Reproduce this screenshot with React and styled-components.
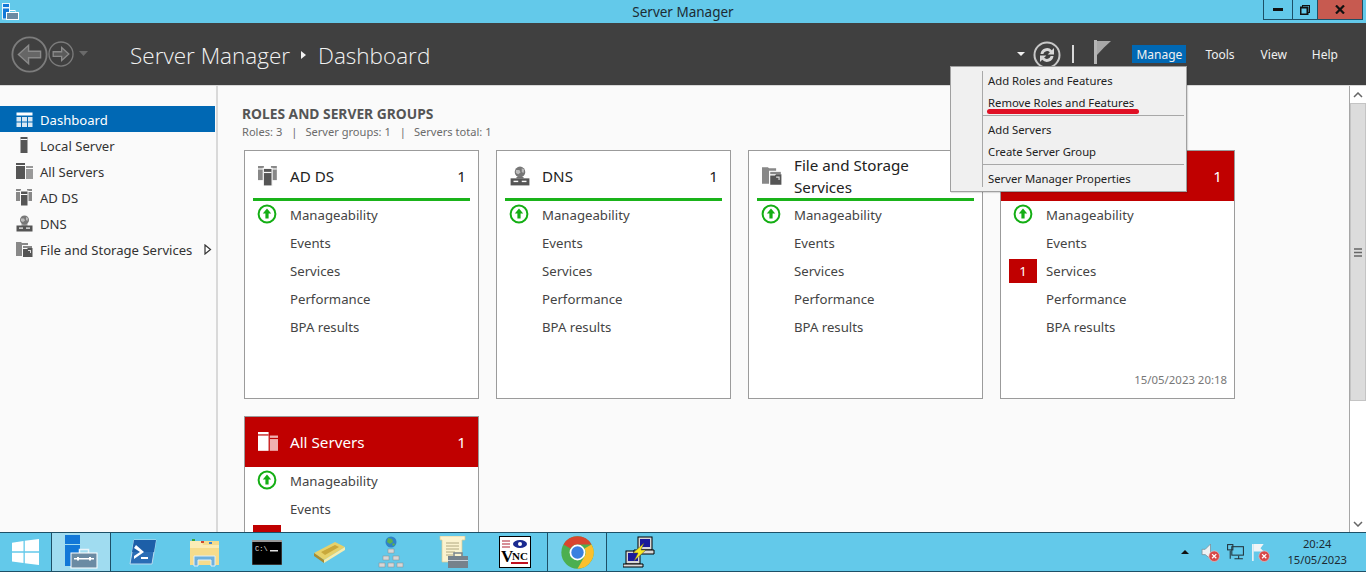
import styled, { createGlobalStyle } from 'styled-components';

const GlobalStyle = createGlobalStyle`
  html, body, #root { margin: 0; height: 100%; }
  body {
    overflow: hidden;
    background: #fafafa;
    font-family: "Noto Sans", "Open Sans", "Liberation Sans", sans-serif;
    font-size: 13px;
  }
  * { box-sizing: border-box; }
`;

const Shell = styled.div`
  position: relative;
  display: grid;
  grid-template-rows: 23px 63px 1fr 40px;
  height: 572px;
  width: 1366px;
  overflow: hidden;
`;

const TitleBar = styled.div`
  position: relative;
  display: flex;
  align-items: center;
  justify-content: center;
  background: #63c9ea;
  color: #1c2b33;
  font-size: 13.5px;
`;

const AppGlyph = styled.svg`
  position: absolute;
  left: 2px;
  top: 3px;
`;

const WindowButtons = styled.div`
  position: absolute;
  right: 3px;
  top: 0;
  display: flex;
  height: 20px;
  border: 1px solid #1d5067;
  border-top: 0;
`;

const WindowButton = styled.div`
  display: flex;
  align-items: center;
  justify-content: center;
  width: ${(p) => p.$w}px;
  background: ${(p) => (p.$close ? '#c75a50' : 'transparent')};
  border-left: ${(p) => (p.$first ? '0' : '1px solid #1d5067')};
`;

const Header = styled.header`
  display: flex;
  align-items: center;
  background: #404040;
  border-bottom: 1px solid #d8d8d8;
  padding-left: 11px;
  padding-right: 22px;
`;

const NavArrows = styled.div`
  display: flex;
  align-items: center;
  width: 119px;
`;

const Crumbs = styled.div`
  display: flex;
  align-items: center;
  flex: 1;
  padding-top: 2px;
  color: #f2f2f2;
  font-family: "Open Sans", "Noto Sans", sans-serif;
  font-weight: 300;
  font-size: 22.5px;
`;

const CrumbArrow = styled.span`
  width: 0;
  height: 0;
  margin: 0 12px 0 11px;
  border-left: 5px solid #f2f2f2;
  border-top: 4px solid transparent;
  border-bottom: 4px solid transparent;
`;

const HeaderTools = styled.div`
  display: flex;
  align-items: center;
`;

const DropCaret = styled.span`
  width: 0;
  height: 0;
  margin-right: 8px;
  border-top: 4px solid #f0f0f0;
  border-left: 4px solid transparent;
  border-right: 4px solid transparent;
`;

const RefreshGlyph = styled.svg`
  margin-top: 2px;
`;

const Separator = styled.span`
  width: 2px;
  height: 18px;
  background: #d8d8d8;
  margin: 0 20px 0 11px;
`;

const FlagGlyph = styled.svg`
  margin-bottom: 4px;
`;

const MenuLabels = styled.nav`
  display: flex;
  align-items: center;
  margin-left: 20px;
`;

const MenuLabel = styled.span`
  padding: 0 ${(p) => (p.$active ? 4 : 6)}px;
  height: 18px;
  line-height: 20px;
  color: #f0f0f0;
  font-size: 12px;
  margin-right: ${(p) => p.$gap}px;
  background: ${(p) => (p.$active ? '#0068b4' : 'transparent')};
`;

const Body = styled.div`
  display: grid;
  grid-template-columns: 215px 3px 1fr 17px;
  min-height: 0;
`;

const Sidebar = styled.aside`
  padding-top: 20px;
  background: #fafafa;
`;

const SideRow = styled.div`
  display: flex;
  align-items: center;
  height: 26px;
  padding: 1px 0 0 16px;
  gap: 7px;
  color: ${(p) => (p.$active ? '#ffffff' : '#333333')};
  background: ${(p) => (p.$active ? '#0068b4' : 'transparent')};
  font-size: 13.1px;
`;

const SideChevron = styled.svg`
  margin-left: 5px;
`;

const Divider = styled.div`
  background: #d9d9d9;
  margin-left: 1px;
`;

const Content = styled.main`
  padding: 19px 0 0 24px;
  overflow: hidden;
  background: #fafafa;
`;

const SectionTitle = styled.h2`
  margin: 0;
  color: #555555;
  font-size: 13.8px;
  font-weight: 700;
  line-height: 18px;
`;

const SectionMeta = styled.div`
  display: flex;
  color: #6b6b6b;
  font-size: 11.1px;
  line-height: 17px;
  margin-bottom: 10px;
  white-space: pre;
`;

const MetaPipe = styled.span`
  margin: 0 8px 0 9px;
`;

const CardGrid = styled.div`
  display: grid;
  grid-template-columns: repeat(4, 235px);
  grid-auto-rows: 249px;
  gap: 17px;
  margin-left: 2px;
`;

const Card = styled.section`
  display: flex;
  flex-direction: column;
  background: #ffffff;
  border: 1px solid #9b9b9b;
  padding-bottom: 11px;
`;

const CardHead = styled.div`
  display: flex;
  align-items: center;
  height: ${(p) => (p.$alert ? 50 : 49)}px;
  flex: none;
  padding: 0 12px 0 13px;
  gap: 12px;
  color: ${(p) => (p.$alert ? '#ffffff' : '#222222')};
  background: ${(p) => (p.$alert ? '#c00000' : 'transparent')};
  font-size: 15.2px;
`;

const CardName = styled.div`
  flex: 1;
  line-height: 22px;
`;

const CardRule = styled.div`
  height: 3px;
  margin: -2px 8px 0;
  background: #1ab31a;
  flex: none;
`;

const CardRow = styled.div`
  display: flex;
  align-items: center;
  height: 28px;
  flex: none;
  color: #444444;
  font-size: 13.2px;
`;

const RowMark = styled.div`
  display: flex;
  align-items: center;
  width: 45px;
  padding: 0 8px 2px 8px;
`;

const StatusGlyph = styled.svg`
  margin-left: 4px;
`;

const AlertBadge = styled.span`
  display: flex;
  align-items: center;
  justify-content: center;
  width: 28px;
  height: 24px;
  margin-top: 2px;
  background: #c00000;
  color: #ffffff;
`;

const Stamp = styled.div`
  margin-top: auto;
  padding-right: 7px;
  text-align: right;
  color: #777777;
  font-size: 11.4px;
`;

const Scrollbar = styled.div`
  display: flex;
  flex-direction: column;
  background: #ffffff;
  border-left: 1px solid #a6a6a6;
`;

const ScrollButton = styled.div`
  display: flex;
  align-items: center;
  justify-content: center;
  height: 17px;
  flex: none;
  background: #fff;
`;

const ScrollThumb = styled.div`
  display: flex;
  align-items: center;
  justify-content: center;
  height: 298px;
  flex: none;
  background: #dcdcdc;
  border: 1px solid #c4c4c4;
`;

const ScrollRest = styled.div`
  flex: 1;
`;

const Taskbar = styled.footer`
  display: flex;
  align-items: center;
  background: #63c9ea;
  border-top: 1px solid #1d5067;
  border-bottom: 1px solid #1d5067;
`;

const StartButton = styled.div`
  display: flex;
  align-items: center;
  justify-content: center;
  width: 50px;
  height: 100%;
`;

const TaskSlot = styled.div`
  display: flex;
  align-items: center;
  justify-content: center;
  width: 62px;
  height: 100%;
`;

const TaskButton = styled.div`
  display: flex;
  align-items: center;
  justify-content: center;
  width: 60px;
  height: 100%;
  background: ${(p) => (p.$front ? '#a0dcf0' : p.$open ? '#74cfec' : 'transparent')};
  border-left: ${(p) => (p.$open ? '1px solid #1d5067' : '1px solid transparent')};
  border-right: ${(p) => (p.$open ? '1px solid #1d5067' : '1px solid transparent')};
`;

const Tray = styled.div`
  display: flex;
  align-items: center;
  margin-left: auto;
  height: 100%;
  padding-right: 19px;
`;

const TrayCaret = styled.span`
  width: 0;
  height: 0;
  margin-right: 12px;
  border-bottom: 4px solid #111;
  border-left: 4px solid transparent;
  border-right: 4px solid transparent;
`;

const TrayIcons = styled.div`
  display: flex;
  gap: 6px;
  margin-right: 17px;
`;

const Clock = styled.div`
  text-align: center;
  color: #1c2b33;
  font-size: 11.2px;
  line-height: 16px;
`;

const ContextMenu = styled.div`
  position: absolute;
  left: 950px;
  top: 66px;
  width: 237px;
  height: 126px;
  padding: 2px 2px 2px 32px;
  background: #f0f0f0;
  border: 1px solid #a0a0a0;
  box-shadow: 1px 1px 1px rgba(0, 0, 0, 0.12);
`;

const MenuGutter = styled.div`
  position: absolute;
  left: 31px;
  top: 4px;
  bottom: 4px;
  width: 1px;
  background: #a8a8a8;
`;

const MenuItem = styled.div`
  height: 22px;
  line-height: 23px;
  padding-left: 5px;
  color: #222222;
  font-size: 11.3px;
`;

const MenuRule = styled.div`
  height: 1px;
  margin: 2px 0;
  background: #a8a8a8;
`;

const RedMark = styled.div`
  position: absolute;
  left: 36px;
  top: 42px;
  width: 152px;
  height: 5px;
  border-radius: 3px;
  background: #e01025;
`;

const Tower = ({ x, y, w, h, fill, top }) => (
  <>
    <rect x={x} y={y} width={w} height={h} fill={fill} />
    <rect x={x} y={y + 2} width={w} height={1} fill={top} />
  </>
);

const DashIcon = ({ c = '#fff' }) => (
  <svg width="17" height="16" viewBox="0 0 17 16">
    <rect x="0.5" y="0.5" width="16" height="3" fill={c} />
    <g fill={c} opacity="0.85">
      <rect x="0.5" y="5" width="4.5" height="4.5" />
      <rect x="6" y="5" width="5" height="4.5" />
      <rect x="12" y="5" width="4.5" height="4.5" />
      <rect x="0.5" y="10.5" width="4.5" height="4.5" />
      <rect x="6" y="10.5" width="5" height="4.5" />
      <rect x="12" y="10.5" width="4.5" height="4.5" />
    </g>
  </svg>
);

const LocalIcon = () => (
  <svg width="17" height="17" viewBox="0 0 17 17">
    <Tower x={4.5} y={0} w={7} h={16} fill="#555" top="#fafafa" />
  </svg>
);

const AllIcon = ({ c = '#555', c2 = '#999', bg = '#fafafa', size = 17 }) => (
  <svg width={size} height={size} viewBox="0 0 17 17">
    <Tower x={0} y={0} w={9} h={16} fill={c} top={bg} />
    <Tower x={10} y={3} w={7} h={13} fill={c2} top={bg} />
  </svg>
);

const AdIcon = ({ size = 17 }) => (
  <svg width={size} height={size} viewBox="0 0 17 17">
    <rect x="0" y="0" width="5" height="12" fill="#888" />
    <rect x="11" y="0" width="5" height="12" fill="#888" />
    <rect x="0" y="2" width="5" height="1" fill="#fafafa" />
    <rect x="11" y="2" width="5" height="1" fill="#fafafa" />
    <rect x="4.5" y="2" width="7.5" height="15" fill="#555" stroke="#fafafa" strokeWidth="1" />
    <rect x="5" y="5" width="6.5" height="1" fill="#fafafa" />
  </svg>
);

const DnsIcon = ({ size = 17 }) => (
  <svg width={size} height={size} viewBox="0 0 17 17">
    <circle cx="8.5" cy="5" r="4.5" fill="#777" />
    <path d="M5 3.5h3l1 2-2 1.5-2-1zM10 2l2 1-.5 3-1.5-1z" fill="#bbb" />
    <rect x="5.5" y="9.5" width="6" height="1" fill="#555" />
    <rect x="0.5" y="10.5" width="16" height="6" fill="#555" />
    <rect x="3" y="12.5" width="4" height="1.2" fill="#fafafa" />
    <rect x="10" y="12.5" width="4" height="1.2" fill="#fafafa" />
  </svg>
);

const FilesIcon = ({ size = 17 }) => (
  <svg width={size} height={size} viewBox="0 0 17 17">
    <path d="M0 1h5l1 1h6v2H6v11H0z" fill="#888" />
    <path d="M7 5h9v2H7z" fill="#888" />
    <path d="M7 8h4l1-1h4.5v9H7z" fill="#555" />
    <path d="M12 9h3v3h-1v-2h-2z" fill="#ddd" />
  </svg>
);

const UpStatus = () => (
  <StatusGlyph width="20" height="20" viewBox="0 0 20 20">
    <circle cx="10" cy="10" r="8.4" fill="#fff" stroke="#14ae14" strokeWidth="2" />
    <path d="M10 4.6L14.2 9.6H11.6V14.6H8.4V9.6H5.8Z" fill="#14ae14" />
  </StatusGlyph>
);

const BackArrow = ({ size }) => (
  <svg width={size} height={size} viewBox="0 0 40 40">
    <circle cx="20" cy="20" r="18.5" fill="none" stroke="#7c7c7c" strokeWidth="2" />
    {size > 30 ? (
      <path d="M8 20L19 10v6.500h13v7H19V30z" fill="#666" stroke="#8a8a8a" strokeWidth="1.500" />
    ) : (
      <path d="M32 20L21 10v6.500H8v7h13V30z" fill="#5a5a5a" stroke="#8a8a8a" strokeWidth="2" />
    )}
  </svg>
);

const RefreshIcon = () => (
  <RefreshGlyph width="28" height="28" viewBox="0 0 28 28">
    <circle cx="14" cy="14" r="12.5" fill="none" stroke="#c8c8c8" strokeWidth="2" />
    <path d="M7.5 13a6.6 6.6 0 0 1 11.3-3.8L21 7v6.5h-6.4l2.3-2.3a4 4 0 0 0-6.6 1.8z" fill="#d8d8d8" />
    <path d="M20.5 15a6.6 6.6 0 0 1-11.3 3.8L7 21v-6.5h6.4l-2.3 2.3a4 4 0 0 0 6.6-1.8z" fill="#d8d8d8" />
  </RefreshGlyph>
);

const FlagIcon = () => (
  <FlagGlyph width="18" height="24" viewBox="0 0 18 24">
    <rect x="0" y="0" width="3" height="24" fill="#b5b5b5" />
    <path d="M3 1H17L10 7.500 3 15z" fill="#a8a8a8" />
  </FlagGlyph>
);

const WinLogo = () => (
  <svg width="27" height="26" viewBox="0 0 27 26">
    <path d="M0 3.700L11.500 2V12.300H0zM12.800 1.800L27 0V12.300H12.800zM0 13.700H11.500V24L0 22.400zM12.800 13.700H27V26L12.800 24.200z" fill="#fff" />
  </svg>
);

const ServerManagerTask = () => (
  <svg width="34" height="34" viewBox="0 0 34 34">
    <rect x="1" y="0" width="15" height="9" fill="#1278d8" />
    <rect x="1" y="10" width="15" height="21" fill="#1278d8" />
    <rect x="15.500" y="14.500" width="9" height="5" fill="none" stroke="#e8f4fa" strokeWidth="1.500" />
    <rect x="7" y="18" width="26" height="15" fill="#6b8ba3" stroke="#fff" strokeWidth="1" />
    <rect x="10" y="23" width="20" height="1.500" fill="#fff" />
    <rect x="13" y="22" width="2" height="3.500" fill="#fff" />
    <rect x="25" y="22" width="2" height="3.500" fill="#fff" />
  </svg>
);

const PowerShell = () => (
  <svg width="28" height="28" viewBox="0 0 28 28">
    <path d="M5 2H27L23 26H1z" fill="#2a6db5" stroke="#bcdcf0" strokeWidth="1" />
    <path d="M5 2H27L25 14H3z" fill="#1d5fa8" />
    <path d="M7 7l8 7-10 7v-3l6-4-6-4z" fill="#fff" />
    <rect x="12" y="19" width="7" height="2" fill="#fff" />
  </svg>
);

const Explorer = () => (
  <svg width="32" height="32" viewBox="0 0 32 32">
    <path d="M1 5H30V29H1z" fill="#f6dc8c" />
    <path d="M1 5H12L14 9H30V12H1z" fill="#fbecb6" />
    <rect x="3" y="3" width="3" height="2" fill="#3aa63a" />
    <rect x="12" y="5" width="3" height="2" fill="#d04a30" />
    <rect x="20" y="6" width="3" height="2" fill="#3a80d0" />
    <path d="M5 30V20H26V30H22V24H9V30z" fill="#6fb0dc" stroke="#dff0fa" strokeWidth="1" />
  </svg>
);

const Cmd = () => (
  <svg width="30" height="25" viewBox="0 0 30 25">
    <rect x="0" y="0" width="30" height="25" fill="#000" stroke="#666" />
    <rect x="0" y="0" width="30" height="2" fill="#999" />
    <text x="3" y="11" fill="#e0e0e0" fontSize="7" fontFamily="Liberation Mono, monospace">C:\</text>
    <rect x="18" y="10" width="8" height="1.500" fill="#e0e0e0" />
  </svg>
);

const Book = () => (
  <svg width="32" height="24" viewBox="0 0 32 24">
    <path d="M1 13L22 2L32 7L11 20z" fill="#e6d16a" />
    <path d="M1 13L11 20V23L1 16z" fill="#a88c30" />
    <path d="M11 20L32 7V10L11 23z" fill="#f5ecb0" />
    <path d="M8 12L22 5L26 7L12 15z" fill="#c8a83c" />
  </svg>
);

const NetTree = () => (
  <svg width="26" height="32" viewBox="0 0 26 32">
    <circle cx="13" cy="6" r="5.500" fill="#2f82c8" />
    <path d="M10 2l4 1 1 3-3 2-3-2zM15 7l2 1-1 2-2-1z" fill="#5cb050" />
    <g fill="#d6d6d6" stroke="#8a8a8a" strokeWidth="0.500">
      <rect x="10" y="13" width="6" height="4" />
      <rect x="5" y="20" width="6" height="4" />
      <rect x="15" y="20" width="6" height="4" />
      <rect x="1" y="27" width="6" height="4" />
      <rect x="10" y="27" width="6" height="4" />
      <rect x="19" y="27" width="6" height="4" />
    </g>
  </svg>
);

const ScriptTool = () => (
  <svg width="30" height="33" viewBox="0 0 30 33">
    <path d="M2 0H27V4H24V26H4V4H2z" fill="#fbf3cf" stroke="#d8c890" strokeWidth="0.700" />
    <g stroke="#b0a880" strokeWidth="1">
      <path d="M8 7h13M8 10h13M8 13h13M8 16h9M8 19h7" />
    </g>
    <rect x="10" y="20" width="20" height="12" fill="#76828c" />
    <rect x="16" y="17" width="8" height="4" fill="none" stroke="#76828c" strokeWidth="1.500" />
    <rect x="10" y="24" width="20" height="1" fill="#c8d0d8" />
  </svg>
);

const Vnc = () => (
  <svg width="32" height="32" viewBox="0 0 32 32">
    <rect x="0.500" y="0.500" width="31" height="31" fill="#fff" stroke="#000" />
    <ellipse cx="21" cy="8" rx="7" ry="4" fill="#1a2a90" />
    <circle cx="21" cy="8" r="2" fill="#fff" />
    <path d="M3 5h8M3 8h8M3 11h8" stroke="#b02030" strokeWidth="1.200" />
    <text x="2" y="26" fill="#000" fontSize="17" fontWeight="700" fontFamily="Liberation Serif, serif">V</text>
    <text x="13" y="24" fill="#000" fontSize="11" fontWeight="700" fontFamily="Liberation Serif, serif">NC</text>
    <rect x="12" y="26" width="17" height="2" fill="#c01020" />
  </svg>
);

const Chrome = () => (
  <svg width="33" height="33" viewBox="0 0 48 48">
    <circle cx="24" cy="24" r="23.500" fill="#4caf50" />
    <path d="M24 .5A23.500 23.500 0 0 1 44.400 12.250H24a11.750 11.750 0 0 0-10.180 5.870L3.650 12.250A23.500 23.500 0 0 1 24 .5z" fill="#d8452e" />
    <path d="M44.400 12.250A23.500 23.500 0 0 1 24 47.500L34.180 29.870A11.750 11.750 0 0 0 34.180 18.120z" fill="#fbc02d" />
    <circle cx="24" cy="24" r="11.500" fill="#fff" />
    <circle cx="24" cy="24" r="9" fill="#3a80e0" />
  </svg>
);

const Putty = () => (
  <svg width="32" height="32" viewBox="0 0 32 32">
    <g fill="#d8d8d8" stroke="#000" strokeWidth="1">
      <rect x="15" y="1" width="14" height="13" />
      <rect x="3" y="15" width="14" height="13" />
      <path d="M11 14h20v4H11zM0 28h20v3H0z" />
    </g>
    <rect x="17" y="3" width="10" height="8" fill="#1a1a9a" />
    <rect x="5" y="17" width="10" height="8" fill="#1a1a9a" />
    <path d="M21 7L10 17l5 0-4 8 12-11-5 0z" fill="#f8e820" stroke="#444" strokeWidth="0.500" />
  </svg>
);

const ErrorDot = () => (
  <>
    <circle cx="12.500" cy="12.500" r="5" fill="#d84848" stroke="#f0c0c0" strokeWidth="0.600" />
    <path d="M10.500 10.500l4 4m0-4l-4 4" stroke="#fff" strokeWidth="1.200" />
  </>
);

const Speaker = () => (
  <svg width="19" height="19" viewBox="0 0 18 18">
    <path d="M1 6H4L9 1V15L4 11H1z" fill="#eef2f4" stroke="#7a8a92" strokeWidth="0.700" />
    <ErrorDot />
  </svg>
);

const NetTray = () => (
  <svg width="19" height="19" viewBox="0 0 18 18">
    <g fill="none" stroke="#22343c" strokeWidth="1">
      <rect x="1.500" y="1.500" width="5" height="5" />
      <rect x="5.500" y="3.500" width="11" height="8" />
      <path d="M4 7v8M8 15h8M12 12v3" />
    </g>
  </svg>
);

const FlagTray = () => (
  <svg width="19" height="19" viewBox="0 0 18 18">
    <rect x="1" y="1" width="1.500" height="16" fill="#f0f4f6" />
    <path d="M2.500 1H12L9 5l3 3H2.500z" fill="#f0f4f6" />
    <ErrorDot />
  </svg>
);

const sideItems = [
  { label: 'Dashboard', icon: <DashIcon />, active: true },
  { label: 'Local Server', icon: <LocalIcon /> },
  { label: 'All Servers', icon: <AllIcon /> },
  { label: 'AD DS', icon: <AdIcon /> },
  { label: 'DNS', icon: <DnsIcon /> },
  { label: 'File and Storage Services', icon: <FilesIcon />, more: true },
];

const cards = [
  { id: 'adds', name: 'AD DS', icon: <AdIcon size={20} />, count: 1 },
  { id: 'dns', name: 'DNS', icon: <DnsIcon size={20} />, count: 1 },
  { id: 'files', name: 'File and Storage Services', icon: <FilesIcon size={20} />, count: 1 },
  { id: 'local', name: '', icon: null, count: 1, alert: true, serviceAlert: true, stamp: '15/05/2023 20:18' },
  {
    id: 'all',
    name: 'All Servers',
    icon: <AllIcon c="#fff" c2="#f0b0b0" bg="#c00000" size={20} />,
    count: 1,
    alert: true,
    serviceAlert: true,
  },
];

const rows = ['Manageability', 'Events', 'Services', 'Performance', 'BPA results'];

const tasks = [
  { icon: <ServerManagerTask />, open: true, front: true },
  { icon: <PowerShell /> },
  { icon: <Explorer /> },
  { icon: <Cmd /> },
  { icon: <Book /> },
  { icon: <NetTree /> },
  { icon: <ScriptTool /> },
  { icon: <Vnc /> },
  { icon: <Chrome />, open: true },
  { icon: <Putty /> },
];

const App = () => {
  return (
    <Shell>
      <GlobalStyle />
      <TitleBar>
        <AppGlyph width="17" height="17" viewBox="0 0 17 17">
          <rect x="0.500" y="0.500" width="7" height="4" fill="#1278d8" stroke="#e8f6fb" strokeWidth="1" />
          <rect x="0.500" y="5" width="7" height="11" fill="#1278d8" stroke="#e8f6fb" strokeWidth="1" />
          <rect x="4.500" y="9.500" width="12" height="7" fill="#6b8ba3" stroke="#fff" strokeWidth="1" />
          <rect x="8" y="7.500" width="5" height="2" fill="none" stroke="#fff" strokeWidth="1" />
        </AppGlyph>
        Server Manager
        <WindowButtons>
          <WindowButton $w={28} $first>
            <svg width="10" height="4" viewBox="0 0 10 4"><rect width="10" height="3" fill="#111" /></svg>
          </WindowButton>
          <WindowButton $w={25}>
            <svg width="10" height="10" viewBox="0 0 10 10">
              <rect x="2.500" y="0.500" width="7" height="7" fill="none" stroke="#111" />
              <rect x="0.500" y="2.500" width="7" height="7" fill="#63c9ea" stroke="#111" strokeWidth="2" />
            </svg>
          </WindowButton>
          <WindowButton $w={45} $close>
            <svg width="10" height="9" viewBox="0 0 10 9"><path d="M1 0.500l8 8m0-8l-8 8" stroke="#111" strokeWidth="2.200" /></svg>
          </WindowButton>
        </WindowButtons>
      </TitleBar>

      <Header>
        <NavArrows>
          <BackArrow size={37} />
          <BackArrow size={26} />
          <svg width="20" height="8" viewBox="0 0 20 8"><path d="M5 1h9L9.500 6z" fill="#6a6a6a" /></svg>
        </NavArrows>
        <Crumbs>
          Server Manager
          <CrumbArrow />
          Dashboard
        </Crumbs>
        <HeaderTools>
          <DropCaret />
          <RefreshIcon />
          <Separator />
          <FlagIcon />
          <MenuLabels>
            <MenuLabel $active $gap={13}>Manage</MenuLabel>
            <MenuLabel $gap={14}>Tools</MenuLabel>
            <MenuLabel $gap={13}>View</MenuLabel>
            <MenuLabel $gap={0}>Help</MenuLabel>
          </MenuLabels>
        </HeaderTools>
      </Header>

      <Body>
        <Sidebar>
          {sideItems.map((item) => (
            <SideRow key={item.label} $active={item.active}>
              {item.icon}
              {item.label}
              {item.more && (
                <SideChevron width="8" height="11" viewBox="0 0 8 11">
                  <path d="M1 1l5.500 4.500L1 10z" fill="#fff" stroke="#333" strokeWidth="1.200" />
                </SideChevron>
              )}
            </SideRow>
          ))}
        </Sidebar>
        <Divider />
        <Content>
          <SectionTitle>ROLES AND SERVER GROUPS</SectionTitle>
          <SectionMeta>
            <span>Roles: 3</span>
            <MetaPipe>|</MetaPipe>
            <span>Server groups: 1</span>
            <MetaPipe>|</MetaPipe>
            <span>Servers total: 1</span>
          </SectionMeta>
          <CardGrid>
            {cards.map((card) => (
              <Card key={card.id}>
                <CardHead $alert={card.alert}>
                  {card.icon}
                  <CardName>{card.name}</CardName>
                  <span>{card.count}</span>
                </CardHead>
                {!card.alert && <CardRule />}
                {rows.map((row) => (
                  <CardRow key={row}>
                    <RowMark>
                      {row === 'Manageability' && <UpStatus />}
                      {row === 'Services' && card.serviceAlert && <AlertBadge>1</AlertBadge>}
                    </RowMark>
                    {row}
                  </CardRow>
                ))}
                {card.stamp && <Stamp>{card.stamp}</Stamp>}
              </Card>
            ))}
          </CardGrid>
        </Content>
        <Scrollbar>
          <ScrollButton>
            <svg width="10" height="6" viewBox="0 0 10 6"><path d="M1 5l4-4 4 4" fill="none" stroke="#666" strokeWidth="1.500" /></svg>
          </ScrollButton>
          <ScrollThumb>
            <svg width="8" height="9" viewBox="0 0 8 9"><path d="M0 1h8M0 4.500h8M0 8h8" stroke="#666" strokeWidth="1.500" /></svg>
          </ScrollThumb>
          <ScrollRest />
          <ScrollButton>
            <svg width="10" height="6" viewBox="0 0 10 6"><path d="M1 1l4 4 4-4" fill="none" stroke="#666" strokeWidth="1.500" /></svg>
          </ScrollButton>
        </Scrollbar>
      </Body>

      <Taskbar>
        <StartButton><WinLogo /></StartButton>
        {tasks.map((task, i) => (
          <TaskSlot key={i}>
            <TaskButton $open={task.open} $front={task.front}>{task.icon}</TaskButton>
          </TaskSlot>
        ))}
        <Tray>
          <TrayCaret />
          <TrayIcons>
            <Speaker />
            <NetTray />
            <FlagTray />
          </TrayIcons>
          <Clock>
            <div>20:24</div>
            <div>15/05/2023</div>
          </Clock>
        </Tray>
      </Taskbar>

      <ContextMenu>
        <MenuGutter />
        <MenuItem>Add Roles and Features</MenuItem>
        <MenuItem>Remove Roles and Features</MenuItem>
        <MenuRule />
        <MenuItem>Add Servers</MenuItem>
        <MenuItem>Create Server Group</MenuItem>
        <MenuRule />
        <MenuItem>Server Manager Properties</MenuItem>
        <RedMark />
      </ContextMenu>
    </Shell>
  );
};

export default App;
